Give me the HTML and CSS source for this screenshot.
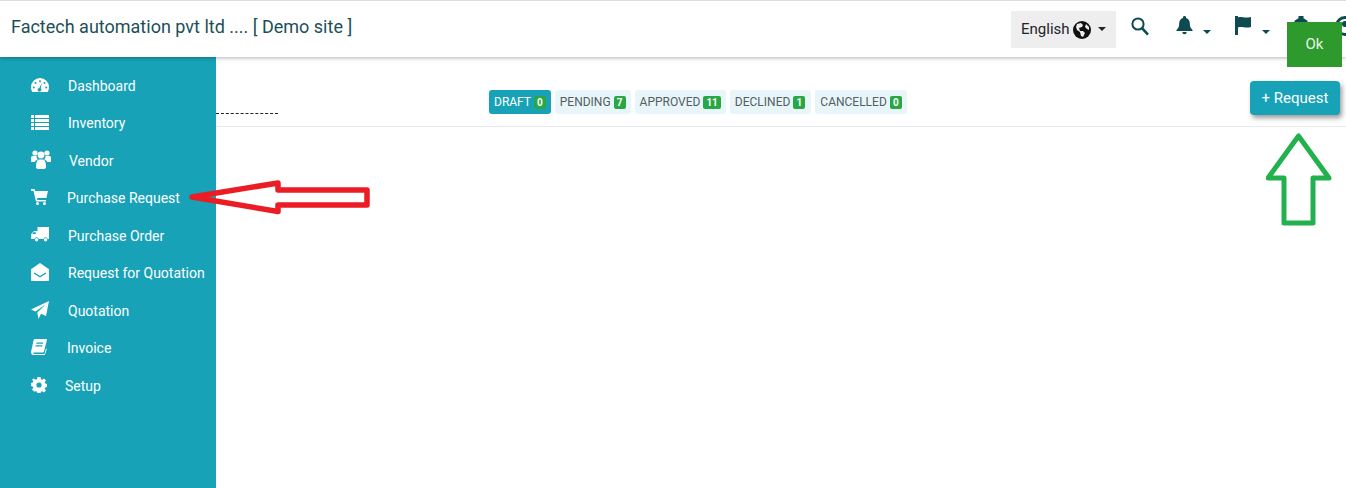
FILE: index.html
```html
<!DOCTYPE html>
<html lang="en">
<head>
<meta charset="utf-8">
<title>Purchase Request</title>
<link rel="stylesheet" href="styles.css">
</head>
<body>
<header class="topbar">
  <div class="brand">Factech automation pvt ltd .... [ Demo site ]</div>
  <div class="tools">
    <button class="lang">English
      <svg class="globe" width="18" height="18" viewBox="0 0 18 18"><circle cx="9" cy="9" r="9" fill="#111"/><path d="M4 3l4-1 2 2-1 2-3 1 1 3 3 0 2 2-2 4-2-1-1-4-3-2-1-3z M13 3l3 3 0 3-2-1-2-2z" fill="#eee"/></svg>
      <span class="caret caret-dark"></span>
    </button>
    <svg class="icon-search" width="18" height="19" viewBox="0 0 18 19"><circle cx="7" cy="7" r="5.6" fill="none" stroke="#0d4a52" stroke-width="2"/><path d="M11 11.2l6 6.4" stroke="#0d4a52" stroke-width="2.6"/></svg>
    <span class="tool tool-bell">
      <svg width="17" height="19" viewBox="0 0 17 19"><path d="M8.5 0a1.5 1.5 0 0 1 1.5 2c2.5.6 3.8 2.8 3.8 5.5 0 3 .8 4.600 2.700 6.500v1H.5v-1c1.900-1.900 2.700-3.500 2.700-6.500C3.200 4.800 4.500 2.600 7 2A1.500 1.500 0 0 1 8.500 0zM6.300 16h4.400a2.200 2.200 0 0 1-4.400 0z" fill="#0d4a52"/></svg>
      <span class="caret"></span>
    </span>
    <span class="tool tool-flag">
      <svg width="16" height="19" viewBox="0 0 16 19"><path d="M0 0h3v19H0zM3 1.500c4-1.400 6 1.200 13-.5v10c-6 1.700-9-1-13 .5z" fill="#0d4a52"/></svg>
      <span class="caret"></span>
    </span>
    <svg class="icon-gear" width="20" height="20" viewBox="0 0 20 20"><circle cx="10" cy="10" r="8" fill="#0d4a52"/><path d="M7.500 0h5v4h-5zM7.500 16h5v4h-5zM0 7.500h4v5H0zM16 7.500h4v5h-4z" fill="#0d4a52"/></svg>
    <svg class="icon-user" width="20" height="20" viewBox="0 0 20 20"><circle cx="10" cy="10" r="8.500" fill="none" stroke="#0d4a52" stroke-width="3"/><circle cx="10" cy="8" r="3" fill="#0d4a52"/></svg>
  </div>
</header>

<div class="shell">
  <nav class="sidebar">
    <a class="nav-item">
      <svg class="nav-icon" width="18" height="16" viewBox="0 0 18 16"><path fill-rule="evenodd" d="M9 1a9 9 0 0 1 9 9c0 2-.5 3.500-1.300 5H1.300A9.500 9.500 0 0 1 0 10a9 9 0 0 1 9-9zM9 3.200a1 1 0 1 0 0 2 1 1 0 0 0 0-2zM4.500 5a1 1 0 1 0 0 2 1 1 0 0 0 0-2zM13.500 5a1 1 0 1 0 0 2 1 1 0 0 0 0-2zM2.800 9.500a1 1 0 1 0 0 2 1 1 0 0 0 0-2zM15.200 9.500a1 1 0 1 0 0 2 1 1 0 0 0 0-2zM10.800 6L8.300 11a1.800 1.800 0 1 0 1.500.6z" fill="#fff"/></svg>
      <span>Dashboard</span>
    </a>
    <a class="nav-item">
      <svg class="nav-icon" width="18" height="15" viewBox="0 0 18 15"><path d="M0 0h3v3H0zM4 0h14v3H4zM0 4h3v3H0zM4 4h14v3H4zM0 8h3v3H0zM4 8h14v3H4zM0 12h3v3H0zM4 12h14v3H4z" fill="#fff"/></svg>
      <span>Inventory</span>
    </a>
    <a class="nav-item nav-vendor">
      <svg class="nav-icon" width="20" height="19" viewBox="0 0 20 19"><g fill="#fff"><circle cx="4" cy="3" r="2.600"/><circle cx="16" cy="3" r="2.600"/><circle cx="10" cy="5" r="3.400"/><path d="M0 7.500c0-1 1-1.500 2-1.500h3.500c0 1.500.5 2.500 1.300 3.200C5 10 4 11 3.800 12H1c-.6 0-1-.4-1-1zM20 7.500c0-1-1-1.500-2-1.500h-3.500c0 1.500-.5 2.500-1.300 3.200 1.800.8 2.800 1.800 3 2.800H19c.6 0 1-.4 1-1z"/><path d="M5 17c0-4 1-7.500 3-7.500h4c2 0 3 3.500 3 7.500 0 1.200-1 2-2 2H7c-1 0-2-.8-2-2z"/></g></svg>
      <span>Vendor</span>
    </a>
    <a class="nav-item">
      <svg class="nav-icon" width="17" height="16" viewBox="0 0 17 16"><g fill="#fff"><path d="M0 0h3.500l.6 2H17l-1.600 7H6l.4 2H15v1.600H5L2.500 1.700H0z"/><circle cx="6.500" cy="14.500" r="1.500"/><circle cx="13.500" cy="14.500" r="1.500"/></g></svg>
      <span>Purchase Request</span>
    </a>
    <a class="nav-item">
      <svg class="nav-icon" width="18" height="15" viewBox="0 0 18 15"><g fill="#fff"><path fill-rule="evenodd" d="M6.500 0H18v12h-1.200a2.300 2.300 0 0 0-4.400 0H7.800a2.300 2.300 0 0 0-4.400 0H1c-.6 0-1-.4-1-1V7.200L3 4h3.500zM2.500 5.200L1.300 7h3.500V5.200z"/><circle cx="5.600" cy="12.800" r="1.700"/><circle cx="14.600" cy="12.800" r="1.700"/></g></svg>
      <span>Purchase Order</span>
    </a>
    <a class="nav-item">
      <svg class="nav-icon" width="18" height="18" viewBox="0 0 18 18"><path d="M9 0l9 6.300V17a1 1 0 0 1-1 1H1a1 1 0 0 1-1-1V6.300zM3.500 9.500l-.8 1L9 14.500l6.300-4-.8-1L9 13z" fill="#fff" fill-rule="evenodd"/></svg>
      <span>Request for Quotation</span>
    </a>
    <a class="nav-item">
      <svg class="nav-icon" width="18" height="18" viewBox="0 0 18 18"><path d="M18 0l-3 15-5-2.200L7.500 18l-1.200-6.500L15 3 4.500 10.500 0 8.500z" fill="#fff"/></svg>
      <span>Quotation</span>
    </a>
    <a class="nav-item nav-invoice">
      <svg class="nav-icon" width="16" height="16" viewBox="0 0 16 16"><path fill-rule="evenodd" d="M4 0h11c1 0 1 .8.800 1.500L13 12.500c-.2.800-.8 1-1.500 1H3c-1 0-1 1.500 0 1.500h10.500l1.500-5.500.8.800L14 15.500c-.1.300-.4.500-.8.500H2.500C.8 16-.3 14.500.1 12.500L2.500 1.500C2.700.6 3.200 0 4 0zM5.500 3.500l-.3 1.200h6.800l.3-1.200zM4.700 6.300l-.3 1.200h6.800l.3-1.200z" fill="#fff"/></svg>
      <span>Invoice</span>
    </a>
    <a class="nav-item nav-setup">
      <svg class="nav-icon" width="16" height="16" viewBox="0 0 16 16"><path fill-rule="evenodd" d="M6.500 0h3l.4 2.200 1.300.6L13 1.500l2 2-1.300 1.800.6 1.300 2.200.4v3l-2.200.4-.6 1.300 1.300 1.800-2 2-1.800-1.300-1.300.6-.4 2.200h-3l-.4-2.200-1.300-.6L3 14.500l-2-2 1.300-1.800-.6-1.300L0 9V6l1.700-.4.600-1.300L1 2.500l2-1 1.800 1.300 1.300-.6zM8 5.400a2.600 2.600 0 1 0 0 5.200 2.600 2.600 0 0 0 0-5.200z" fill="#fff"/></svg>
      <span>Setup</span>
    </a>
  </nav>

  <main class="content">
    <div class="toolbar">
      <div class="dash-stub"></div>
      <div class="tabs">
        <a class="tab tab-active">DRAFT <b class="count">0</b></a>
        <a class="tab">PENDING <b class="count">7</b></a>
        <a class="tab">APPROVED <b class="count">11</b></a>
        <a class="tab tab-wide">DECLINED <b class="count">1</b></a>
        <a class="tab">CANCELLED <b class="count">0</b></a>
      </div>
      <button class="add-btn">+ Request</button>
    </div>
  </main>
</div>

<button class="ok-btn">Ok</button>

<svg class="arrow arrow-red" width="184" height="37" viewBox="0 0 184 37"><path d="M3 17L89 3v7h89v15H89v6.500z" fill="none" stroke="#ec1c24" stroke-width="5.500" stroke-linejoin="round"/></svg>
<svg class="arrow arrow-green" width="66" height="94" viewBox="0 0 66 94"><path d="M32.500 3L2 45h16v45h29V45h16z" fill="none" stroke="#22b14c" stroke-width="5" stroke-linejoin="round"/></svg>
</body>
</html>
```
FILE: styles.css
```css
* { box-sizing: border-box; }
html, body { margin: 0; height: 488px; overflow: hidden; background: #fff; }
body { font-family: Roboto, "Liberation Sans", sans-serif; position: relative; }

.topbar {
  height: 57px;
  border-top: 1px solid #ddd;
  background: #fff;
  display: flex;
  justify-content: space-between;
  padding: 10px 0 0 11px;
  box-shadow: 0 1px 4px rgba(0,0,0,.3);
  position: relative;
  z-index: 2;
}
.brand { font-size: 18px; line-height: 32px; color: #1d4f57; letter-spacing: 0; }
.tools { display: flex; align-items: flex-start; width: 335px; flex: none; }
.tools > * { flex: none; }
.lang {
  width: 105px; height: 37px; background: #eee; border: 0; padding: 0 0 2px 10px;
  display: flex; align-items: center; font: 15px Roboto, sans-serif; color: #212529; margin-right: 15px;
}
.globe { margin-left: 3px; margin-right: 7px; margin-top: 2px; }
.caret { display: inline-block; border: 4px solid transparent; border-top-color: #0d4a52; border-bottom: 0; }
.caret-dark { border-top-color: #212529; }
.icon-search { margin-top: 6px; margin-right: 27px; }
.tool { display: flex; align-items: flex-start; margin-top: 5px; }
.tool .caret { margin-top: 14px; margin-left: 10px; }
.tool-bell { margin-right: 24px; }
.tool-flag { margin-right: 21px; }
.tool-flag .caret { margin-left: 11px; }
.icon-gear { margin-top: 5px; margin-right: 24px; }
.icon-user { margin-top: 5px; }

.shell { display: flex; height: 431px; }
.sidebar {
  width: 216px; flex: none; background: #17a2b8;
  padding: 10px 0 0 31px;
  display: flex; flex-direction: column;
}
.nav-item {
  height: 37.5px; display: flex; align-items: center; gap: 19px;
  font-size: 14px; color: #fff;
}
.nav-item .nav-icon { flex: none; transform: translateY(-1px); }
.nav-vendor { gap: 18px; }
.nav-invoice { gap: 20px; }
.nav-setup { gap: 18px; }

.content { flex: 1; min-width: 0; }
.toolbar {
  height: 70px; border-bottom: 1px solid #e9ecef;
  display: flex; align-items: flex-start; padding-right: 6px;
}
.dash-stub { width: 62px; height: 57px; border-bottom: 1px dashed #222; flex: none; }
.tabs { display: flex; gap: 4px; margin: 33px 0 0 211px; }
.tab {
  height: 24px; padding: 0 5px; border-radius: 3px; background: #e8f6f9;
  display: flex; align-items: center; font-size: 12px; color: #555d63;
  white-space: pre;
}
.tab-wide { padding-right: 6px; }
.tab-active { background: #17a2b8; color: #fff; }
.count {
  background: #28a745; color: #fff; font-size: 10px; font-weight: 700; line-height: 13px;
  min-width: 12px; padding: 0 3px; border-radius: 2px; text-align: center;
}
.add-btn {
  margin: 24px 0 0 auto; width: 90px; height: 34px; border: 0; border-radius: 4px;
  background: #17a2b8; color: #fff; font: 15px Roboto, sans-serif;
  box-shadow: 2px 3px 5px rgba(0,0,0,.4);
}

.ok-btn {
  position: absolute; left: 1287px; top: 22px; width: 55px; height: 45px; z-index: 5;
  background: #2e9a2e; border: 0; color: #e6f5e6; font: 15px Roboto, sans-serif; padding: 0 0 2px;
}
.arrow { position: absolute; z-index: 4; }
.arrow-red { left: 189px; top: 180px; }
.arrow-green { left: 1266px; top: 133px; }
```
